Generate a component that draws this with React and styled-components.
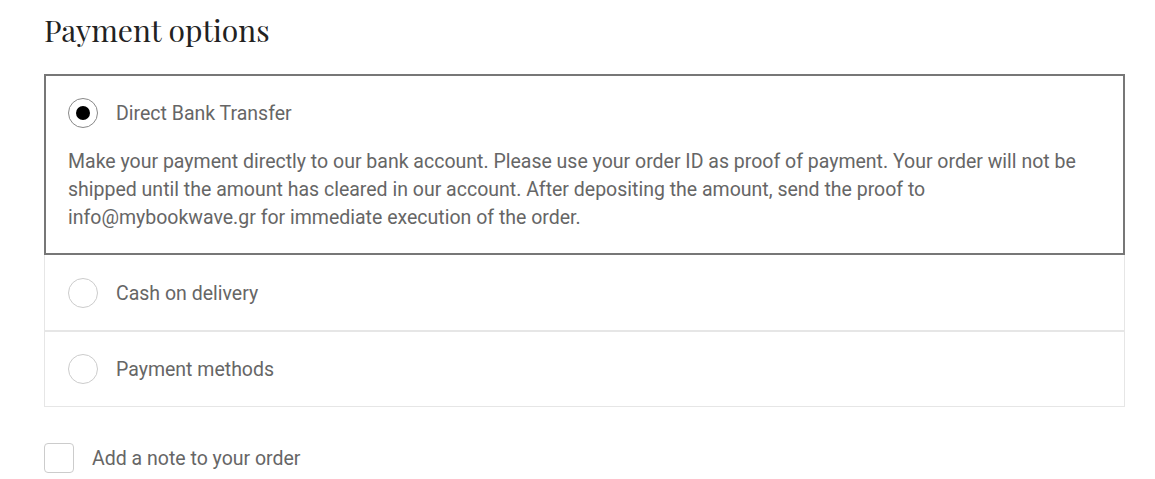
import React, { useState } from "react";
import styled, { createGlobalStyle } from "styled-components";

const GlobalStyle = createGlobalStyle`
  body {
    margin: 0;
    background: #fff;
    font-family: Roboto, "Liberation Sans", sans-serif;
  }
`;

const options = [
  {
    id: "bank",
    label: "Direct Bank Transfer",
    text: "Make your payment directly to our bank account. Please use your order ID as proof of payment. Your order will not be shipped until the amount has cleared in our account. After depositing the amount, send the proof to info@mybookwave.gr for immediate execution of the order.",
  },
  { id: "cod", label: "Cash on delivery" },
  { id: "methods", label: "Payment methods" },
];

function App() {
  const [selected, setSelected] = useState("bank");
  const [note, setNote] = useState(false);

  return (
    <Page>
      <GlobalStyle />
      <Title>Payment options</Title>
      <List>
        {options.map((opt) => (
          <Option key={opt.id} active={selected === opt.id}>
            <OptionHead onClick={() => setSelected(opt.id)}>
              <Radio active={selected === opt.id} />
              <Label>{opt.label}</Label>
            </OptionHead>
            {selected === opt.id && opt.text && <Description>{opt.text}</Description>}
          </Option>
        ))}
      </List>
      <NoteRow onClick={() => setNote(!note)}>
        <Checkbox checked={note} />
        <NoteLabel>Add a note to your order</NoteLabel>
      </NoteRow>
    </Page>
  );
}

const Page = styled.div`
  padding: 10px 0 0 44px;
  width: 1081px;
`;

const Title = styled.h2`
  margin: 0 0 24px;
  font-family: "Playfair Display", "DejaVu Serif", "Liberation Serif", serif;
  font-weight: 400;
  font-size: 30px;
  line-height: 40px;
  color: #222;
`;

const List = styled.div`
  display: flex;
  flex-direction: column;
  border: 1px solid #e6e6e6;
  border-top: none;
`;

const Option = styled.div`
  border: ${(p) => (p.active ? "2px solid #777" : "none")};
  border-bottom: ${(p) => (p.active ? "2px solid #777" : "2px solid #e6e6e6")};
  margin: ${(p) => (p.active ? "0 -1px" : "0")};
  padding: ${(p) => (p.active ? "22px 22px 21px" : "23px 23px 22px")};

  &:last-child {
    border-bottom: ${(p) => (p.active ? "2px solid #777" : "none")};
    padding-top: 22px;
    padding-bottom: 22px;
  }
`;

const OptionHead = styled.div`
  display: flex;
  align-items: center;
  gap: 18px;
  cursor: pointer;
`;

const Radio = styled.span`
  box-sizing: border-box;
  width: 30px;
  height: 30px;
  border-radius: 50%;
  border: 1px solid ${(p) => (p.active ? "#888" : "#ccc")};
  display: flex;
  align-items: center;
  justify-content: center;
  flex-shrink: 0;

  &::after {
    content: "";
    display: ${(p) => (p.active ? "block" : "none")};
    width: 14px;
    height: 14px;
    border-radius: 50%;
    background: #000;
  }
`;

const Label = styled.span`
  font-size: 19.5px;
  color: #666;
`;

const Description = styled.p`
  margin: 20px 0 0;
  font-size: 19.5px;
  line-height: 28px;
  color: #666;
`;

const NoteRow = styled.label`
  display: flex;
  align-items: center;
  gap: 18px;
  margin-top: 36px;
  cursor: pointer;
`;

const Checkbox = styled.span`
  box-sizing: border-box;
  width: 30px;
  height: 30px;
  border: 1px solid #ccc;
  border-radius: 4px;
  background: ${(p) => (p.checked ? "#000" : "#fff")};
`;

const NoteLabel = styled.span`
  font-size: 19.5px;
  color: #666;
`;

export default App;
